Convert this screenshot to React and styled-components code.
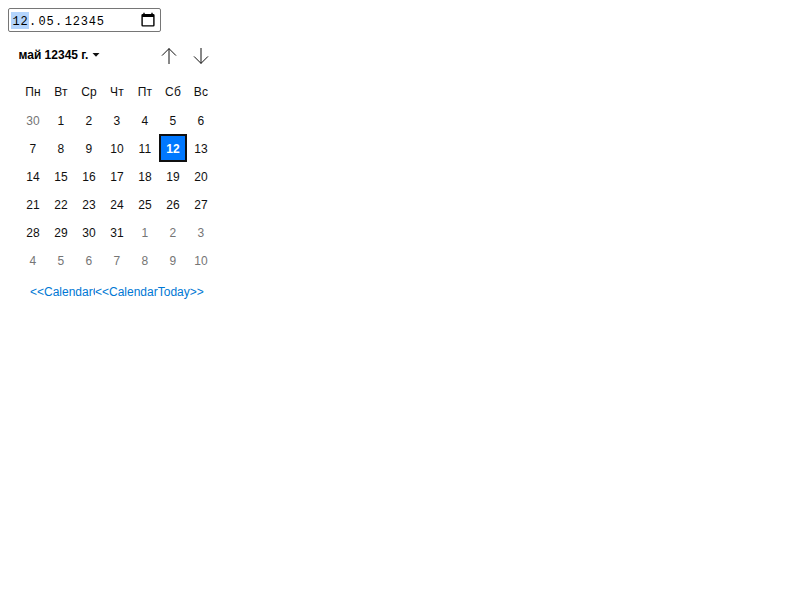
import React from "react";
import styled, { createGlobalStyle } from "styled-components";

const Global = createGlobalStyle`
  body { margin: 0; background: #fff; font-family: "Liberation Sans", Arial, sans-serif; }
`;

const Page = styled.main`
  display: flex;
  flex-direction: column;
  align-items: flex-start;
  padding: 8px;
`;

const DateField = styled.div`
  display: flex;
  align-items: center;
  box-sizing: border-box;
  width: 153px;
  height: 24px;
  padding: 0 4px 0 2px;
  border: 1px solid #767676;
  border-radius: 2px;
  font: 12px/17px "Liberation Mono", monospace;
  letter-spacing: 0.8px;
  color: #000;
`;

const Segment = styled.span`
  box-sizing: border-box;
  padding: 2px 0.4px 0 1.6px;
  height: 17px;
  line-height: 17px;
  background: ${(p) => (p.$active ? "#b3d4fc" : "transparent")};
`;

const Dot = styled.span`
  box-sizing: border-box;
  height: 17px;
  padding-top: 2px;
  line-height: 17px;
`;

const FieldIcon = styled.svg`
  display: block;
  margin-left: auto;
`;

const Popup = styled.section`
  display: flex;
  flex-direction: column;
  width: 202px;
  margin-left: 8px;
  padding-top: 7px;
`;

const Header = styled.header`
  display: flex;
  align-items: center;
  height: 32px;
`;

const MonthButton = styled.div`
  display: flex;
  align-items: center;
  gap: 4px;
  padding-left: 2.5px;
  font-size: 12px;
  line-height: 14px;
  font-weight: 700;
  white-space: nowrap;
`;

const Caret = styled.svg`
  display: block;
`;

const NavButtons = styled.div`
  display: flex;
  gap: 16px;
  margin-left: auto;
  padding: 2px 9px 0 0;
`;

const Grid = styled.div`
  display: grid;
  grid-template-columns: repeat(7, 28px);
  grid-template-rows: 29px repeat(6, 28px);
  margin: 6px 0 0 3px;
  font-size: 12px;
`;

const Cell = styled.div`
  display: flex;
  align-items: center;
  justify-content: center;
  box-sizing: border-box;
  line-height: 14px;
  padding-top: ${(p) => (p.$heading ? "0" : "2px")};
  letter-spacing: ${(p) => (p.$selected ? "0" : "0.2px")};
  color: ${(p) => (p.$selected ? "#fff" : p.$muted ? "#757575" : "#101010")};
  font-weight: ${(p) => (p.$selected ? 700 : 400)};
  background: ${(p) => (p.$selected ? "#0078ff" : "transparent")};
  border: 2px solid ${(p) => (p.$selected ? "#101010" : "transparent")};
`;

const Footer = styled.footer`
  display: flex;
  padding: 11px 0 0 14px;
  font-size: 12px;
  line-height: 14px;
  color: #0078d4;
`;

const FooterLink = styled.span`
  width: ${(p) => p.$width};
  overflow: hidden;
  white-space: nowrap;
`;

const weekdays = ["Пн", "Вт", "Ср", "Чт", "Пт", "Сб", "Вс"];
const days = [
  { n: 30, muted: true },
  ...Array.from({ length: 31 }, (_, i) => ({ n: i + 1, selected: i === 11 })),
  ...Array.from({ length: 10 }, (_, i) => ({ n: i + 1, muted: true })),
];

function Arrow({ down }) {
  return (
    <svg width="16" height="16" viewBox="0 0 16 16" fill="none" stroke="#101010">
      <path d={down ? "M8 0V15.5" : "M8 16V0.5"} strokeWidth="1" />
      <path d={down ? "M1 8.4L8 15.4L15 8.4" : "M1 7.6L8 0.6L15 7.6"} strokeWidth="1" />
    </svg>
  );
}

export default function App() {
  return (
    <Page>
      <Global />
      <DateField>
        <Segment $active>12</Segment>
        <Dot>.</Dot>
        <Segment>05</Segment>
        <Dot>.</Dot>
        <Segment>12345</Segment>
        <FieldIcon width="16" height="16" viewBox="0 0 16 16">
          <path
            fillRule="evenodd"
            d="M3.3.7h1.4V2h6.6V.7h1.4V2h.6a1.3 1.3 0 0 1 1.3 1.3v10a1.3 1.3 0 0 1-1.3 1.3H2.7a1.3 1.3 0 0 1-1.3-1.3v-10A1.3 1.3 0 0 1 2.7 2h.6zM2.8 5v8.2h10.4V5z"
            fill="#000"
          />
        </FieldIcon>
      </DateField>
      <Popup>
        <Header>
          <MonthButton>
            май 12345 г.
            <Caret width="8" height="4" viewBox="0 0 8 4">
              <path d="M0.5 0h7L4 3.7z" fill="#101010" />
            </Caret>
          </MonthButton>
          <NavButtons>
            <Arrow />
            <Arrow down />
          </NavButtons>
        </Header>
        <Grid>
          {weekdays.map((d) => (
            <Cell key={d} $heading>{d}</Cell>
          ))}
          {days.map((d, i) => (
            <Cell key={i} $muted={d.muted} $selected={d.selected}>{d.n}</Cell>
          ))}
        </Grid>
        <Footer>
          <FooterLink $width="65px">&lt;&lt;CalendarClear&gt;&gt;</FooterLink>
          <FooterLink $width="112px">&lt;&lt;CalendarToday&gt;&gt;</FooterLink>
        </Footer>
      </Popup>
    </Page>
  );
}
